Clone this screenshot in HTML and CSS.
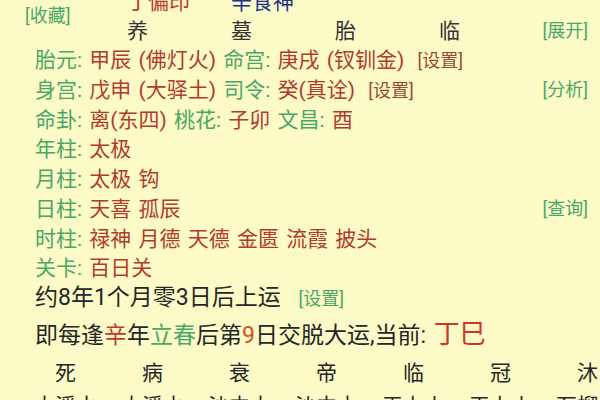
FILE: index.html
```html
<!DOCTYPE html>
<html lang="zh-CN">
<head>
  <meta charset="UTF-8" />
  <meta name="viewport" content="width=device-width, initial-scale=1.0" />
  <title>排盘</title>
  <link rel="stylesheet" href="styles.css">
</head>
<body>
  <div class="board">
    <div class="pillars">
      <span class="fav">[收藏]</span>
      <span class="god red">丁偏印</span>
      <span class="god blue">辛食神</span>
      <span class="god"></span>
      <span class="god"></span>
      <span></span>
      <span class="stage">养</span>
      <span class="stage">墓</span>
      <span class="stage">胎</span>
      <span class="stage">临</span>
      <span class="tag">[展开]</span>
    </div>

    <div class="info">
      <div class="line">
        <span><span class="k">胎元:</span> <span class="v">甲辰 (佛灯火)</span> <span class="k">命宫:</span> <span class="v">庚戌 (钗钏金)</span> <span class="set">[设置]</span></span>
      </div>
      <div class="line">
        <span><span class="k">身宫:</span> <span class="v">戊申 (大驿土)</span> <span class="k">司令:</span> <span class="v">癸(真诠)</span> <span class="set">[设置]</span></span>
        <span class="tag">[分析]</span>
      </div>
      <div class="line">
        <span><span class="k">命卦:</span> <span class="v">离(东四)</span> <span class="k">桃花:</span> <span class="v">子卯</span> <span class="k">文昌:</span> <span class="v">酉</span></span>
      </div>
      <div class="line">
        <span><span class="k">年柱:</span> <span class="v">太极</span></span>
      </div>
      <div class="line">
        <span><span class="k">月柱:</span> <span class="v">太极 钩</span></span>
      </div>
      <div class="line">
        <span><span class="k">日柱:</span> <span class="v">天喜 孤辰</span></span>
        <span class="tag">[查询]</span>
      </div>
      <div class="line">
        <span><span class="k">时柱:</span> <span class="v">禄神 月德 天德 金匮 流霞 披头</span></span>
      </div>
      <div class="line">
        <span><span class="k">关卡:</span> <span class="v">百日关</span></span>
      </div>
    </div>

    <div class="luck">
      <div class="start">约8年1个月零3日后上运 <span class="tag small">[设置]</span></div>
      <div class="change">即每逢<span class="red">辛</span>年<span class="green">立春</span>后第<span class="orange">9</span>日交脱大运,当前: <span class="now">丁巳</span></div>
    </div>

    <div class="cycle">
      <span>死</span><span>病</span><span>衰</span><span>帝</span><span>临</span><span>冠</span><span>沐</span>
      <span>大溪水</span><span>大溪水</span><span>沙中土</span><span>沙中土</span><span>天上火</span><span>天上火</span><span>石榴木</span>
    </div>
  </div>
</body>
</html>
```

FILE: styles.css
```css
* {
  box-sizing: border-box;
}

body {
  margin: 0;
  background-color: #fcfac6;
  font-family: Roboto, "Noto Sans CJK SC", sans-serif;
  color: #262626;
  overflow: hidden;
}

.board {
  width: 600px;
  height: 400px;
  overflow: hidden;
}

.red { color: #c0392b; }
.blue { color: #22318f; }
.green { color: #4aa768; }
.orange { color: #d2502a; }

/* four pillars header, top row is scrolled off */
.pillars {
  display: grid;
  grid-template-columns: 127px 104px 104px 104px 101px 1fr;
  grid-template-rows: 31px 28px;
  align-items: center;
  margin-top: -16px;
  font-size: 21px;
}

.fav {
  grid-row: 1 / 3;
  padding-left: 25px;
  font-size: 18px;
  color: #4aa768;
}

.stage {
  color: #333;
}

.tag {
  font-size: 18px;
  color: #4aa768;
  padding-right: 12px;
  text-align: right;
}

.info {
  padding-left: 35px;
  font-size: 21px;
}

.line {
  display: flex;
  justify-content: space-between;
  align-items: center;
  height: 29.8px;
  white-space: nowrap;
  word-spacing: 2px;
}

.k {
  color: #4aa768;
}

.v {
  color: #b13b2d;
}

.set {
  font-size: 18px;
  color: #9b4a38;
  margin-left: 6px;
}

.luck {
  padding-left: 35px;
  font-size: 23px;
}

.start {
  height: 34px;
  line-height: 34px;
}

.tag.small {
  font-size: 18px;
  margin-left: 12px;
}

.change {
  height: 38px;
  line-height: 38px;
  white-space: nowrap;
}

.now {
  font-size: 26px;
  color: #d0342c;
  margin-left: 2px;
}

.cycle {
  display: grid;
  grid-template-columns: repeat(7, 87px);
  grid-template-rows: 36px 30px;
  align-items: center;
  padding-left: 22px;
  font-size: 21px;
  text-align: center;
  white-space: nowrap;
}
```
